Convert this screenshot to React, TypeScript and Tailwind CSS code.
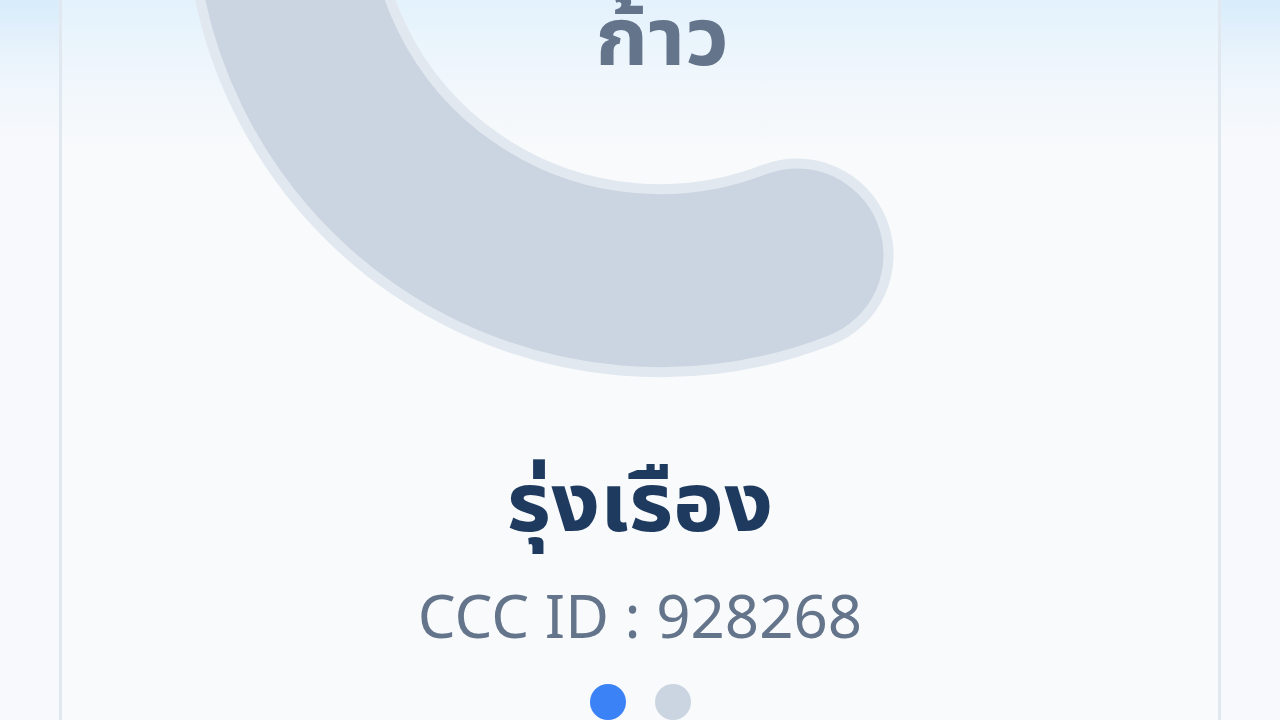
export default function App() {
  return (
    <div className="h-[720px] w-[1280px] overflow-hidden bg-[linear-gradient(180deg,#d8ecfb_0px,#edf5fc_70px,#f7f9fc_140px)] px-[59px] font-['Noto_Sans',sans-serif]">
      <div className="flex h-[800px] flex-col items-center border-x-[3px] border-[#e2e8f0] bg-[linear-gradient(180deg,#e3f2fc_0px,#eff6fc_70px,#f8fafb_150px)]">
        <div className="relative h-[400px] w-full">
          <svg className="absolute inset-0 h-full w-full" viewBox="62 0 1156 400" fill="none">
            <path d="M 281.5 -98 A 378.5 378.5 0 0 0 797 255" stroke="#e2e8f0" strokeWidth="193" strokeLinecap="round" />
            <path d="M 281.5 -98 A 378.5 378.5 0 0 0 797 255" stroke="#cbd5e1" strokeWidth="173" strokeLinecap="round" />
          </svg>
          <div className="relative -mt-[27px] pl-[44px] text-center font-['Noto_Sans_Thai_UI','Noto_Sans_Thai','Noto_Sans',sans-serif] text-[85px] font-bold leading-[1.4] text-[#64748b]">ก้าว</div>
        </div>
        <div className="mt-[38px] font-['Noto_Sans_Thai_UI','Noto_Sans_Thai','Noto_Sans',sans-serif] text-[86px] font-bold leading-[1.4] text-[#1e3a5f]">รุ่งเรือง</div>
        <div className="mt-[15px] text-[60px] leading-[1.4] text-[#64748b]">CCC ID : 928268</div>
        <div className="mt-[27px] flex gap-[29px]">
          <span className="h-[36px] w-[36px] rounded-full bg-[#3b82f6]" />
          <span className="h-[36px] w-[36px] rounded-full bg-[#cbd5e1]" />
        </div>
      </div>
    </div>
  );
}
